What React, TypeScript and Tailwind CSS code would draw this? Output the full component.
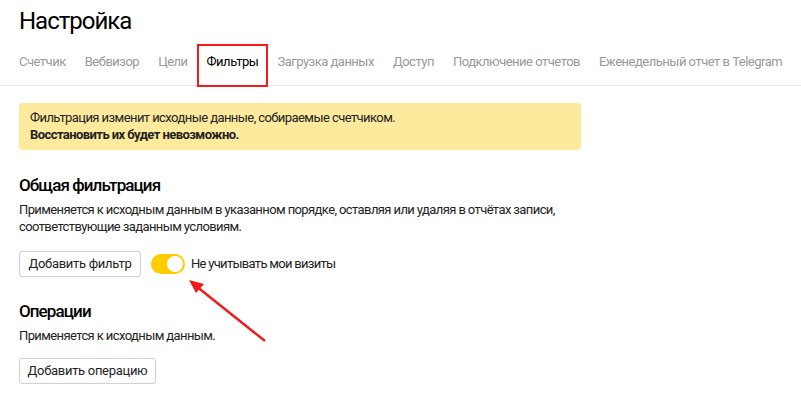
import React from "react";

const tabs = [
  "Счетчик",
  "Вебвизор",
  "Цели",
  "Фильтры",
  "Загрузка данных",
  "Доступ",
  "Подключение отчетов",
  "Еженедельный отчет в Telegram",
];

export default function App() {
  return (
    <div
      className="relative w-[801px] h-[395px] bg-white overflow-hidden text-black"
      style={{ fontFamily: "Roboto, 'Noto Sans', sans-serif" }}
    >
      <div className="px-[19px] pt-[7px]">
        <h1 className="text-[24px] leading-[28px] font-normal tracking-[-1px]">Настройка</h1>
      </div>
      <div className="flex gap-[19px] pl-[19px] h-[51px] items-start border-b border-[#e6e6e6]">
        {tabs.map((t) => (
          <div
            key={t}
            className={
              "relative text-[13px] leading-[16px] pt-[19px] whitespace-nowrap tracking-[-0.5px] " +
              (t === "Фильтры" ? "text-black" : "text-[#999999]")
            }
          >
            {t}
            {t === "Фильтры" && (
              <div className="absolute left-[-10px] right-[-10px] top-[9px] h-[43px] border-2 border-[#f21a1a]" />
            )}
          </div>
        ))}
      </div>
      <div className="px-[19px]">
        <div className="mt-[17px] w-[562px] h-[47px] rounded-[4px] bg-[#feea9d] px-[11px] pt-[6px] text-[13px] leading-[17px] text-[#222] tracking-[-0.57px]">
          <div>Фильтрация изменит исходные данные, собираемые счетчиком.</div>
          <div className="font-bold">Восстановить их будет невозможно.</div>
        </div>
        <h2 className="mt-[24px] text-[17px] leading-[22px] font-medium tracking-[-0.9px]">Общая фильтрация</h2>
        <p className="mt-[5px] text-[13px] leading-[17px] text-[#222] tracking-[-0.6px]">
          Применяется к исходным данным в указанном порядке, оставляя или удаляя в отчётах записи,
          <br />
          соответствующие заданным условиям.
        </p>
        <div className="mt-[16px] flex items-center">
          <button className="h-[26px] w-[122px] rounded-[3px] border border-[#d0d0d0] bg-white text-[13px] text-[#222] tracking-[-0.3px]">
            Добавить фильтр
          </button>
          <div className="ml-[10px] w-[34px] h-[20px] rounded-full bg-[#ffcc00] relative">
            <div className="absolute right-[2px] top-[2px] w-[16px] h-[16px] rounded-full bg-white" />
          </div>
          <span className="ml-[6px] text-[13px] text-[#222] tracking-[-0.7px]">Не учитывать мои визиты</span>
        </div>
        <h2 className="mt-[23px] text-[17px] leading-[22px] font-medium tracking-[-0.9px]">Операции</h2>
        <p className="mt-[5px] text-[13px] leading-[17px] text-[#222] tracking-[-0.6px]">Применяется к исходным данным.</p>
        <button className="mt-[14px] h-[26px] w-[137px] rounded-[3px] border border-[#d0d0d0] bg-white text-[13px] text-[#222] tracking-[-0.3px]">
          Добавить операцию
        </button>
      </div>
      <svg className="absolute left-0 top-0 pointer-events-none" width="801" height="395">
        <line x1="265" y1="341" x2="196" y2="286" stroke="#f21a1a" strokeWidth="2.5" />
        <polygon points="189,280 204,284 196,293" fill="#f21a1a" />
      </svg>
    </div>
  );
}
